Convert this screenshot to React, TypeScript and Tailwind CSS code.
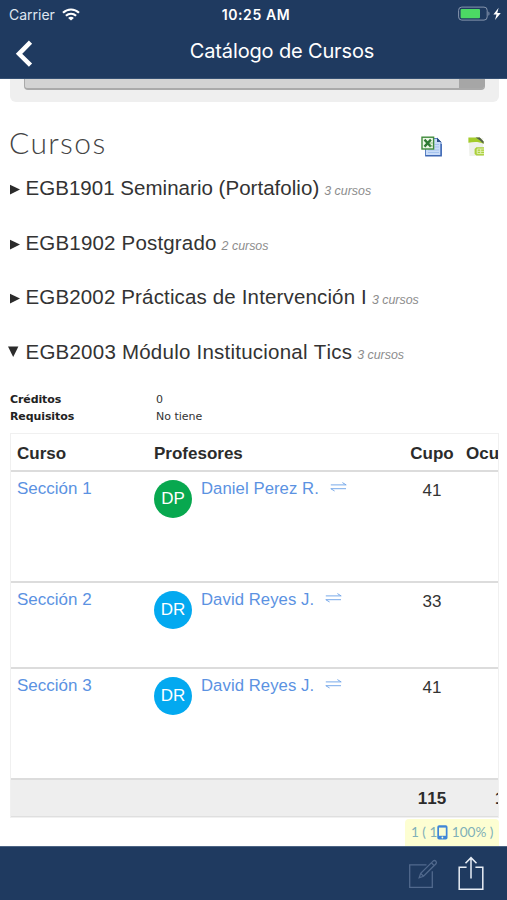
import { ReactNode } from 'react';

interface Course {
    code: string;
    count: number;
    tracking: string;
    open?: boolean;
}

interface Section {
    name: string;
    initials: string;
    teacher: string;
    quota: number;
    color: string;
    height: string;
}

const courses: Course[] = [
    { code: 'EGB1901 Seminario (Portafolio)', count: 3, tracking: 'tracking-[0.03px]' },
    { code: 'EGB1902 Postgrado', count: 2, tracking: 'tracking-[0.18px]' },
    { code: 'EGB2002 Prácticas de Intervención I', count: 3, tracking: 'tracking-[0.15px]' },
    { code: 'EGB2003 Módulo Institucional Tics', count: 3, tracking: 'tracking-[0.23px]', open: true },
];

const sections: Section[] = [
    { name: 'Sección 1', initials: 'DP', teacher: 'Daniel Perez R.', quota: 41, color: 'bg-[#08a84f]', height: 'h-[111px]' },
    { name: 'Sección 2', initials: 'DR', teacher: 'David Reyes J.', quota: 33, color: 'bg-[#03a9f0]', height: 'h-[86px]' },
    { name: 'Sección 3', initials: 'DR', teacher: 'David Reyes J.', quota: 41, color: 'bg-[#03a9f0]', height: 'h-[111px]' },
];

function WifiIcon() {
    return (
        <svg width="18" height="13" viewBox="0 0 18 13" fill="none" stroke="#fff" strokeWidth="2.2">
            <path d="M1 4.8C5.6.4 12.4.4 17 4.8" />
            <path d="M3.9 7.8c3-2.7 7.2-2.7 10.2 0" />
            <path d="M9 12.6 6.1 9.9c1.7-1.5 4.1-1.5 5.8 0z" fill="#fff" stroke="none" />
        </svg>
    );
}

function BatteryIcon() {
    return (
        <svg width="44" height="16" viewBox="0 0 44 16" fill="none">
            <rect x="0.6" y="1.1" width="28.6" height="13" rx="3.2" stroke="#8796ae" strokeWidth="1" />
            <rect x="2.6" y="3" width="19.4" height="9.2" rx="1" fill="#4cd964" />
            <path d="M30.4 5.4c1.5.6 1.5 3.8 0 4.4z" fill="#8796ae" />
            <path d="M40.6 1.7 35.4 8.4h3.1l-1.5 5.5 5.8-7h-3.5z" fill="#fff" />
        </svg>
    );
}

function ExcelIcon() {
    return (
        <svg width="21" height="21" viewBox="0 0 21 21" fill="none">
            <path d="M6.5 2.5h10L20 6v13.5H4.5v-9z" fill="#c9dcf8" stroke="#5a82c4" />
            <path d="M16 1.5 20.2 6H16z" fill="#2d4f86" />
            <path d="M13.5 8.5H18M13.5 11H18M7 14h11M7 16.5h11" stroke="#a5c3ee" />
            <path d="M4.2 19.7h16V8" stroke="#3f68b4" strokeWidth="1.4" />
            <rect x="1" y="1.2" width="11.6" height="11.8" fill="#eef7e8" stroke="#3f8a3b" strokeWidth="1.4" />
            <path d="m3.5 3.6 6.4 7M9.9 3.6l-6.4 7" stroke="#2f7a33" strokeWidth="2.3" />
            <path d="M8.8 7h3M8.8 10h3" stroke="#6fac62" strokeWidth="0.8" />
        </svg>
    );
}

function SheetIcon() {
    return (
        <svg width="16" height="20" viewBox="0 0 16 20" fill="none">
            <path d="M.6 1h14.6v18H1.4z" fill="#eff1ec" />
            <path d="M.4.6h11.2l4 4v2.2C11 4.7 6 4.6.4 5.8z" fill="#a4cc2c" />
            <path d="M7.6.6h4.2l3.8 3.8v2.3C13 5 12 3 7.6.6z" fill="#54604c" />
            <path d="M16 10.2H8.4L6.6 12v5l1.8 1.4H16z" fill="#abd03a" />
            <path d="M16 12H9.2v4.6H16M9.2 14.3H16M12.7 12v4.6" stroke="#e2f0b4" />
        </svg>
    );
}

function SwapIcon() {
    return (
        <svg width="17" height="10" viewBox="0 0 17 10" fill="none" stroke="#79aaea" strokeWidth="1">
            <path d="M.8 2.9h15.4l-3.8-2.3M16 6.7H.8l3.8 2.3" />
        </svg>
    );
}

function PhoneIcon() {
    return (
        <svg width="11" height="15" viewBox="0 0 11 15">
            <rect x="0.3" y="0.3" width="10.2" height="14.2" rx="1.8" fill="#3f86d8" />
            <rect x="2" y="2.6" width="6.8" height="8.2" fill="#fbfcd2" />
            <circle cx="5.4" cy="12.5" r="0.9" fill="#fbfcd2" />
        </svg>
    );
}

function ComposeIcon() {
    return (
        <svg width="30" height="30" viewBox="0 0 30 30" fill="none" stroke="#51698d" strokeWidth="1.3">
            <path d="M18.5 5.8H1.7v22.5h22.6V12.2" />
            <path d="m11.2 18.8 1.5-4.4L25.3 1.9q1.5-.9 2.6.3t.1 2.6L15.5 17.3zM23.4 3.8l2.8 2.8M12.7 14.4l2.8 2.9" />
        </svg>
    );
}

function ShareIcon() {
    return (
        <svg width="26" height="35" viewBox="0 0 26 35" fill="none" stroke="#e8edf5" strokeWidth="1.5">
            <path d="M8.6 11.3H1.2v22h23.6v-22h-7.4" />
            <path d="M13 22.5V1.8M7.5 7.2 13 1.6l5.5 5.6" />
        </svg>
    );
}

function Header({ title }: { title: string }) {
    return (
        <header className="h-[79px] shrink-0 bg-[#1f3a60] border-b border-[#355073] text-white font-['Inter',sans-serif]">
            <div className="h-[28px] grid grid-cols-3 items-center">
                <div className="flex items-center gap-[7px] pl-[9px] text-[14px] text-[#dfe6f0]">
                    Carrier <WifiIcon />
                </div>
                <div className="text-center text-[14px] font-semibold tracking-[0.6px] whitespace-nowrap pl-[5px]">10:25 AM</div>
                <div className="flex justify-end pr-[5px]"><BatteryIcon /></div>
            </div>
            <div className="flex h-[50px] items-center">
                <svg className="ml-[15px] shrink-0" width="19" height="27" viewBox="0 0 19 27" fill="none" stroke="#fff" strokeWidth="4.5">
                    <path d="M15.5 2.2 4 13.8l11.5 11.4" />
                </svg>
                <h1 className="-mt-1 flex-1 pl-[23px] text-center text-[20px] tracking-[-0.15px] whitespace-nowrap">{title}</h1>
            </div>
        </header>
    );
}

function CourseRow({ course }: { course: Course }) {
    return (
        <div className="h-[54.7px] flex items-baseline whitespace-nowrap [font-kerning:none]">
            <svg className="w-4 h-[11px] shrink-0 overflow-visible" viewBox="0 0 16 11" fill="#2b2b2b">
                {course.open ? <path d="M-2 -1.4h10.4L3.2 9z" /> : <path d="M0 0.8v9.6l10-4.8z" />}
            </svg>
            <h3 className={`text-[20.5px] leading-[30px] text-[#333] ${course.tracking}`}>{course.code}</h3>
            <em className="ml-[5px] text-[12.4px] text-[#8c8c8c]">{course.count} cursos</em>
        </div>
    );
}

function Info({ label, children }: { label: string; children: ReactNode }) {
    return (
        <div className="flex h-[17px] items-center">
            <dt className="w-[146px] font-bold tracking-[-0.1px] text-[#222]">{label}</dt>
            <dd>{children}</dd>
        </div>
    );
}

function SectionTable() {
    const columns = 'grid grid-cols-[137px_248px_60px_100px] pl-1.5';

    return (
        <div className="ml-px h-[385px] shrink-0 overflow-hidden border border-[#f0f0f0] text-[17px] leading-5 [font-kerning:none]">
            <div className={`${columns} h-[38px] items-center border-b-2 border-[#dcdcdc] pt-[4px] font-bold text-[#2b2b2b]`}>
                <span>Curso</span>
                <span>Profesores</span>
                <span className="text-center">Cupo</span>
                <span className="pl-[4px]">Ocupados</span>
            </div>
            {sections.map((section) => (
                <div key={section.name} className={`${columns} ${section.height} border-b-2 border-[#dcdcdc] pt-[7px] text-[#5b92e2]`}>
                    <a>{section.name}</a>
                    <div className="flex items-start">
                        <span className={`${section.color} mt-px flex size-[38px] items-center justify-center rounded-full text-white`}>
                            {section.initials}
                        </span>
                        <a className="ml-[9px] text-[16.7px] tracking-[0.07px]">{section.teacher}</a>
                        <span className="ml-[11px] mt-[3px]"><SwapIcon /></span>
                    </div>
                    <span className="pt-0.5 text-center text-[#333]">{section.quota}</span>
                </div>
            ))}
            <div className={`${columns} h-[38px] items-center border-b-2 border-[#dfdfdf] bg-[#eeeeee] pt-[2px] font-bold text-[#2b2b2b]`}>
                <span className="col-start-3 text-center">115</span>
                <span className="pl-[33px]">100</span>
            </div>
        </div>
    );
}

export default function App() {
    return (
        <div className="flex h-[900px] w-[507px] flex-col overflow-hidden bg-white font-['Liberation_Sans',Arial,sans-serif]">
            <Header title="Catálogo de Cursos" />

            <main className="flex flex-1 flex-col overflow-hidden pl-[9px] pr-[8px]">
                {/* bottom of the filter panel, scrolled under the header */}
                <div className="ml-px h-[23px] shrink-0 rounded-b-md bg-[#efefef] px-[14px]">
                    <div className="flex h-[10.5px] justify-end overflow-hidden rounded-b border-b-2 border-l border-[#aaa] bg-[#d3d3d3]">
                        <div className="w-[26px] bg-[#a6a6a6]" />
                    </div>
                </div>

                <div className="mt-[20px] flex h-[40px] shrink-0 items-center">
                    <h2 className="font-['Lato',sans-serif] text-[30px] font-light tracking-[1.4px] text-[#444]">Cursos</h2>
                    <div className="ml-auto mr-[15px] mt-[9px] flex items-center gap-[26px]">
                        <ExcelIcon />
                        <SheetIcon />
                    </div>
                </div>

                <div className="mt-[11px] shrink-0 pl-[0.5px]">
                    {courses.map((course) => (
                        <CourseRow key={course.code} course={course} />
                    ))}
                </div>

                <dl className="mb-[7px] shrink-0 pl-px font-['DejaVu_Sans',Verdana,sans-serif] text-[11px] text-[#333]">
                    <Info label="Créditos">0</Info>
                    <Info label="Requisitos">No tiene</Info>
                </dl>

                <SectionTable />

                <div className="mt-px flex h-[27px] w-[94px] shrink-0 items-center self-end rounded-t bg-[#fdfed2] pl-[6px] font-['Lato',sans-serif] text-[13.6px] text-[#7fb0b8] whitespace-nowrap">
                    1 ( 1<PhoneIcon />&nbsp;100% )
                </div>
            </main>

            <footer className="flex h-[54px] shrink-0 items-center justify-end gap-[20px] border-t border-[#4c6484] bg-[#1f3a60] pr-[23px]">
                <ComposeIcon />
                <ShareIcon />
            </footer>
        </div>
    );
}
